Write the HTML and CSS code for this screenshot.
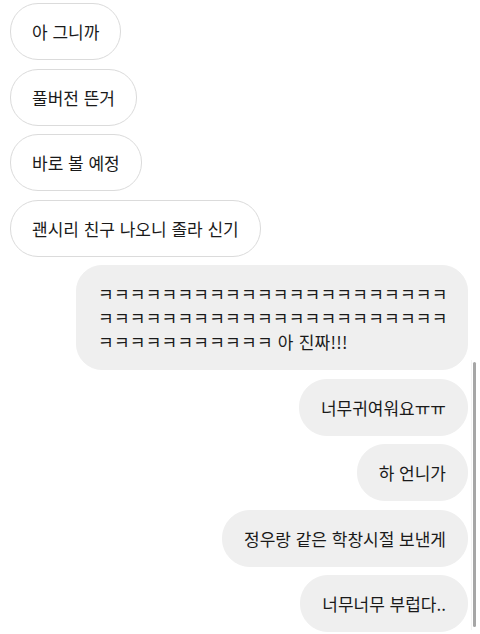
FILE: index.html
```html
<!DOCTYPE html>
<html lang="ko">
<head>
<meta charset="utf-8">
<title>Chat</title>
<link rel="stylesheet" href="styles.css">
</head>
<body>
<div class="thread">
  <div class="bubble incoming">아 그니까</div>
  <div class="bubble incoming">풀버전 뜬거</div>
  <div class="bubble incoming">바로 볼 예정</div>
  <div class="bubble incoming">괜시리 친구 나오니 졸라 신기</div>
  <div class="bubble outgoing laugh">ㅋㅋㅋㅋㅋㅋㅋㅋㅋㅋㅋㅋㅋㅋㅋㅋㅋㅋㅋㅋㅋㅋ<br>ㅋㅋㅋㅋㅋㅋㅋㅋㅋㅋㅋㅋㅋㅋㅋㅋㅋㅋㅋㅋㅋㅋ<br>ㅋㅋㅋㅋㅋㅋㅋㅋㅋㅋㅋ 아 진짜!!!</div>
  <div class="bubble outgoing">너무귀여워요ㅠㅠ</div>
  <div class="bubble outgoing">하 언니가</div>
  <div class="bubble outgoing">정우랑 같은 학창시절 보낸게</div>
  <div class="bubble outgoing">너무너무 부럽다..</div>
</div>
<div class="scrollbar"><div class="thumb"></div></div>
</body>
</html>
```

FILE: styles.css
```css
html, body {
  margin: 0;
  padding: 0;
  background: #ffffff;
}

body {
  width: 480px;
  height: 634px;
  overflow: hidden;
  position: relative;
  font-family: "Noto Sans CJK KR", "Noto Sans", sans-serif;
  font-size: 17px;
  line-height: 24px;
  color: #1a1a1a;
}

.thread {
  display: flex;
  flex-direction: column;
  gap: 8.5px;
  padding: 3px 12px 0 10px;
}

.bubble {
  box-sizing: border-box;
  max-width: 392px;
  padding: 16px 21px 15px;
  border: 1px solid transparent;
  border-radius: 28px;
}

.incoming {
  align-self: flex-start;
  background: #ffffff;
  border-color: #dbdbdb;
}

.outgoing {
  align-self: flex-end;
  background: #efefef;
  border-color: #efefef;
}

.laugh {
  white-space: nowrap;
  letter-spacing: 0.25px;
  border-radius: 26px;
}

.scrollbar {
  position: absolute;
  top: 360px;
  right: 2px;
  width: 6px;
  height: 270px;
  border-left: 1px solid #f4f4f4;
}

.thumb {
  position: absolute;
  top: 2px;
  left: 1px;
  width: 3px;
  height: 265px;
  border-radius: 2px;
  background: #a6a6a6;
}
```
